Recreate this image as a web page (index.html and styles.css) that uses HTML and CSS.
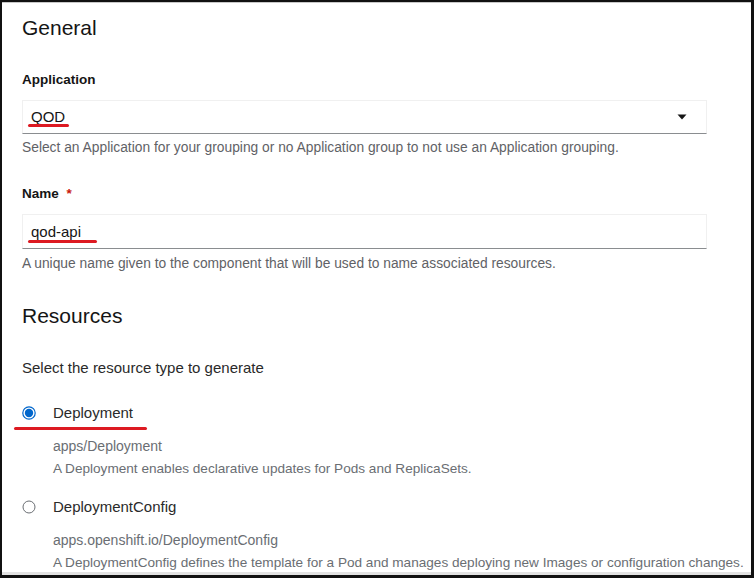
FILE: index.html
```html
<!DOCTYPE html>
<html lang="en">
<head>
<meta charset="utf-8">
<title>General</title>
<link rel="stylesheet" href="styles.css">
</head>
<body>
<div class="frame">
  <div class="content">
    <h2 class="title title-general">General</h2>

    <div class="label label-app">Application</div>
    <div class="field field-select">
      <span class="value">QOD</span>
      <svg class="caret" width="10" height="6" viewBox="0 0 10 6"><path d="M0.5 0.5 H9.5 L5 5.5 Z" fill="#151515"/></svg>
      <span class="mark mark-qod"></span>
    </div>
    <div class="helper helper-app">Select an Application for your grouping or no Application group to not use an Application grouping.</div>

    <div class="label label-name">Name <span class="req">*</span></div>
    <div class="field field-input">
      <span class="value">qod-api</span>
      <span class="mark mark-name"></span>
    </div>
    <div class="helper helper-name">A unique name given to the component that will be used to name associated resources.</div>

    <h2 class="title title-resources">Resources</h2>
    <div class="lead">Select the resource type to generate</div>

    <div class="radio-row row-first">
      <svg class="radio" width="14" height="14" viewBox="0 0 14 14"><circle cx="7" cy="7" r="6.2" fill="#fff" stroke="#0066cc" stroke-width="1.2"/><circle cx="7" cy="7" r="4.2" fill="#0066cc"/></svg>
      <span class="radio-label">Deployment</span>
      <span class="mark mark-deploy"></span>
    </div>
    <div class="kind kind-first">apps/Deployment</div>
    <div class="desc">A Deployment enables declarative updates for Pods and ReplicaSets.</div>

    <div class="radio-row row-second">
      <svg class="radio" width="14" height="14" viewBox="0 0 14 14"><circle cx="7" cy="7" r="6" fill="#fff" stroke="#6a6e73" stroke-width="1"/></svg>
      <span class="radio-label">DeploymentConfig</span>
    </div>
    <div class="kind kind-second">apps.openshift.io/DeploymentConfig</div>
    <div class="desc">A DeploymentConfig defines the template for a Pod and manages deploying new Images or configuration changes.</div>
  </div>
</div>
</body>
</html>
```

FILE: styles.css
```css
* { box-sizing: border-box; }

html, body {
  margin: 0;
  padding: 0;
  background: #ffffff;
}

body {
  font-family: "Liberation Sans", Arial, sans-serif;
  color: #151515;
}

.frame {
  position: relative;
  width: 754px;
  height: 578px;
  border-top: 2px solid #111111;
  border-left: 2px solid #111111;
  border-right: 3px solid #111111;
  border-bottom: 3px solid #111111;
  overflow: hidden;
  box-shadow: inset 0 1px 0 #c8c8c8;
}

.frame::after {
  content: "";
  position: absolute;
  left: 0;
  right: 0;
  bottom: 0;
  height: 3px;
  background: #e2e2e2;
}

.content {
  padding: 12px 0 0 20px;
}

.title {
  margin: 0;
  font-size: 21px;
  line-height: 28px;
  font-weight: 400;
  color: #151515;
}

.title-resources { margin-top: 28px; }

.label {
  font-size: 13.5px;
  line-height: 20px;
  font-weight: 700;
  color: #151515;
}

.label-app { margin-top: 28px; }
.label-name { margin-top: 26px; }

.req {
  color: #c9190b;
  margin-left: 4px;
  font-weight: 700;
}

.field {
  position: relative;
  width: 685px;
  margin-top: 10px;
  border: 1px solid #f0f0f0;
  border-bottom-color: #8a8d90;
  display: flex;
  align-items: center;
  justify-content: space-between;
  padding: 0 19px 0 8px;
  font-size: 15px;
  color: #151515;
}

.field-select { height: 34px; line-height: 32px; }
.field-input { height: 35px; line-height: 33px; }

.caret { display: block; }

.mark {
  position: absolute;
  height: 3px;
  background: #dd1a22;
  border-radius: 2px;
}

.mark-qod { left: 5px; top: 23px; width: 41px; }
.mark-name { left: 5px; top: 25px; width: 69px; }
.mark-deploy { left: -8px; top: 24px; width: 133px; }

.helper {
  font-size: 13.8px;
  line-height: 20px;
  color: #5f6266;
}

.helper-app { margin-top: 4px; }
.helper-name { margin-top: 5px; }

.lead {
  margin-top: 28px;
  font-size: 15px;
  line-height: 20px;
  color: #2a2a2a;
}

.radio-row {
  position: relative;
  display: flex;
  align-items: center;
  gap: 17px;
  font-size: 15px;
  line-height: 20px;
  color: #2a2a2a;
}

.row-first { margin-top: 25px; }
.row-second { margin-top: 18px; }

.radio { display: block; flex: none; }

.kind {
  margin-top: 13px;
  padding-left: 31px;
  font-size: 14px;
  line-height: 20px;
  color: #6a6e73;
}

.desc {
  margin-top: 3px;
  padding-left: 31px;
  font-size: 13.6px;
  line-height: 20px;
  color: #6a6e73;
  white-space: nowrap;
}
```
